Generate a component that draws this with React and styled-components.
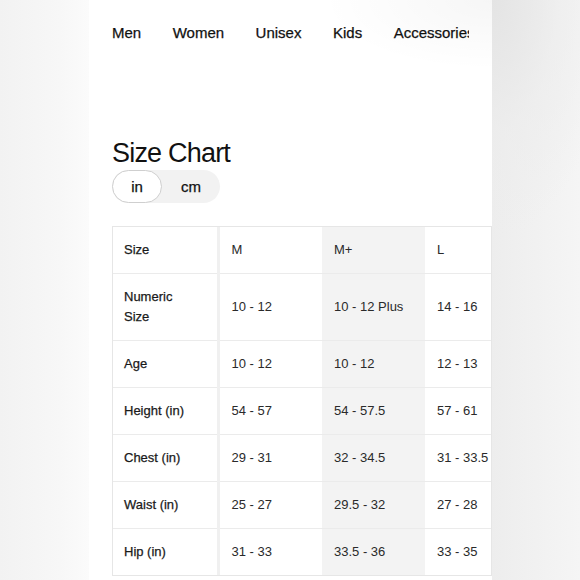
import React from "react";
import styled, { createGlobalStyle } from "styled-components";

const Global = createGlobalStyle`
  html, body { margin: 0; padding: 0; }
  body {
    width: 580px;
    height: 580px;
    overflow: hidden;
    font-family: "Liberation Sans", Arial, sans-serif;
    background:
      radial-gradient(ellipse 120px 240px at 492px 0px, #e4e4e4 0%, rgba(236,236,236,0.6) 55%, rgba(246,246,246,0) 100%),
      linear-gradient(90deg, #f2f2f2 0px, #f7f7f7 60px, #fbfbfb 89px, #fbfbfb 492px, #ededed 492px, #f5f5f5 580px);
  }
`;

const Stage = styled.div`
  display: flex;
  height: 580px;
  padding-left: 89px;
`;

const Panel = styled.div`
  width: 403px;
  height: 580px;
  background:
    radial-gradient(ellipse 170px 70px at 403px 0px, rgba(0,0,0,0.035), rgba(0,0,0,0) 100%),
    #ffffff;
  padding-left: 23px;
  box-sizing: border-box;
  overflow: hidden;
  display: flex;
  flex-direction: column;
`;

const Nav = styled.nav`
  display: flex;
  gap: 31.5px;
  padding-top: 24px;
  width: 357px;
  overflow: hidden;
  white-space: nowrap;
`;

const NavItem = styled.span`
  flex: none;
  font-size: 15px;
  line-height: 17px;
  color: #111;
  -webkit-text-stroke: 0.25px #111;
`;

const Title = styled.h1`
  margin: 96px 0 1px;
  font-size: 27px;
  line-height: 32px;
  font-weight: 400;
  letter-spacing: -0.8px;
  color: #111;
`;

const Toggle = styled.div`
  display: flex;
  width: 108px;
  height: 33px;
  border-radius: 17px;
  background: #f2f2f2;
`;

const Seg = styled.div`
  display: flex;
  align-items: center;
  justify-content: center;
  box-sizing: border-box;
  width: ${(p) => p.$w}px;
  height: 33px;
  border-radius: 17px;
  font-size: 15px;
  color: #111;
  -webkit-text-stroke: 0.25px #111;
  background: ${(p) => (p.$active ? "#fff" : "transparent")};
  border: ${(p) => (p.$active ? "1px solid #cfcfcf" : "none")};
`;

const TableWrap = styled.div`
  margin-top: 23px;
  width: 380px;
  box-sizing: border-box;
  border: 1px solid #e6e6e6;
  overflow: hidden;
`;

const Table = styled.table`
  border-collapse: collapse;
  table-layout: fixed;
  width: 418px;
`;

const Cell = styled.td`
  box-sizing: border-box;
  padding: 13px ${(p) => (p.$first ? 24 : 12)}px 13px ${(p) => (p.$first ? 11 : 12)}px;
  line-height: 20px;
  font-size: 13px;
  white-space: ${(p) => (p.$first ? "normal" : "nowrap")};
  color: ${(p) => (p.$first ? "#1a1a1a" : "#2a2a2a")};
  -webkit-text-stroke: ${(p) => (p.$first ? "0.25px #1a1a1a" : "0")};
  background: ${(p) => (p.$shade ? "#f3f3f3" : "transparent")};
  border-bottom: 1px solid #ebebeb;
  border-right: ${(p) => (p.$first ? "3px solid #f0f0f0" : "none")};
  vertical-align: middle;
  tr:last-child > & { border-bottom: none; }
`;

const cols = [105, 104, 103, 106];

const rows = [
  ["Size", "M", "M+", "L"],
  ["Numeric Size", "10 - 12", "10 - 12 Plus", "14 - 16"],
  ["Age", "10 - 12", "10 - 12", "12 - 13"],
  ["Height (in)", "54 - 57", "54 - 57.5", "57 - 61"],
  ["Chest (in)", "29 - 31", "32 - 34.5", "31 - 33.5"],
  ["Waist (in)", "25 - 27", "29.5 - 32", "27 - 28"],
  ["Hip (in)", "31 - 33", "33.5 - 36", "33 - 35"],
];

export default function App() {
  return (
    <>
      <Global />
      <Stage>
        <Panel>
          <Nav>
            {["Men", "Women", "Unisex", "Kids", "Accessories"].map((n) => (
              <NavItem key={n}>{n}</NavItem>
            ))}
          </Nav>
          <Title>Size Chart</Title>
          <Toggle>
            <Seg $active $w={50}>in</Seg>
            <Seg $w={58}>cm</Seg>
          </Toggle>
          <TableWrap>
            <Table>
              <colgroup>
                {cols.map((w, i) => (
                  <col key={i} style={{ width: w }} />
                ))}
              </colgroup>
              <tbody>
                {rows.map((r) => (
                  <tr key={r[0]}>
                    {r.map((c, i) => (
                      <Cell key={i} $first={i === 0} $shade={i === 2}>
                        {c}
                      </Cell>
                    ))}
                  </tr>
                ))}
              </tbody>
            </Table>
          </TableWrap>
        </Panel>
      </Stage>
    </>
  );
}
